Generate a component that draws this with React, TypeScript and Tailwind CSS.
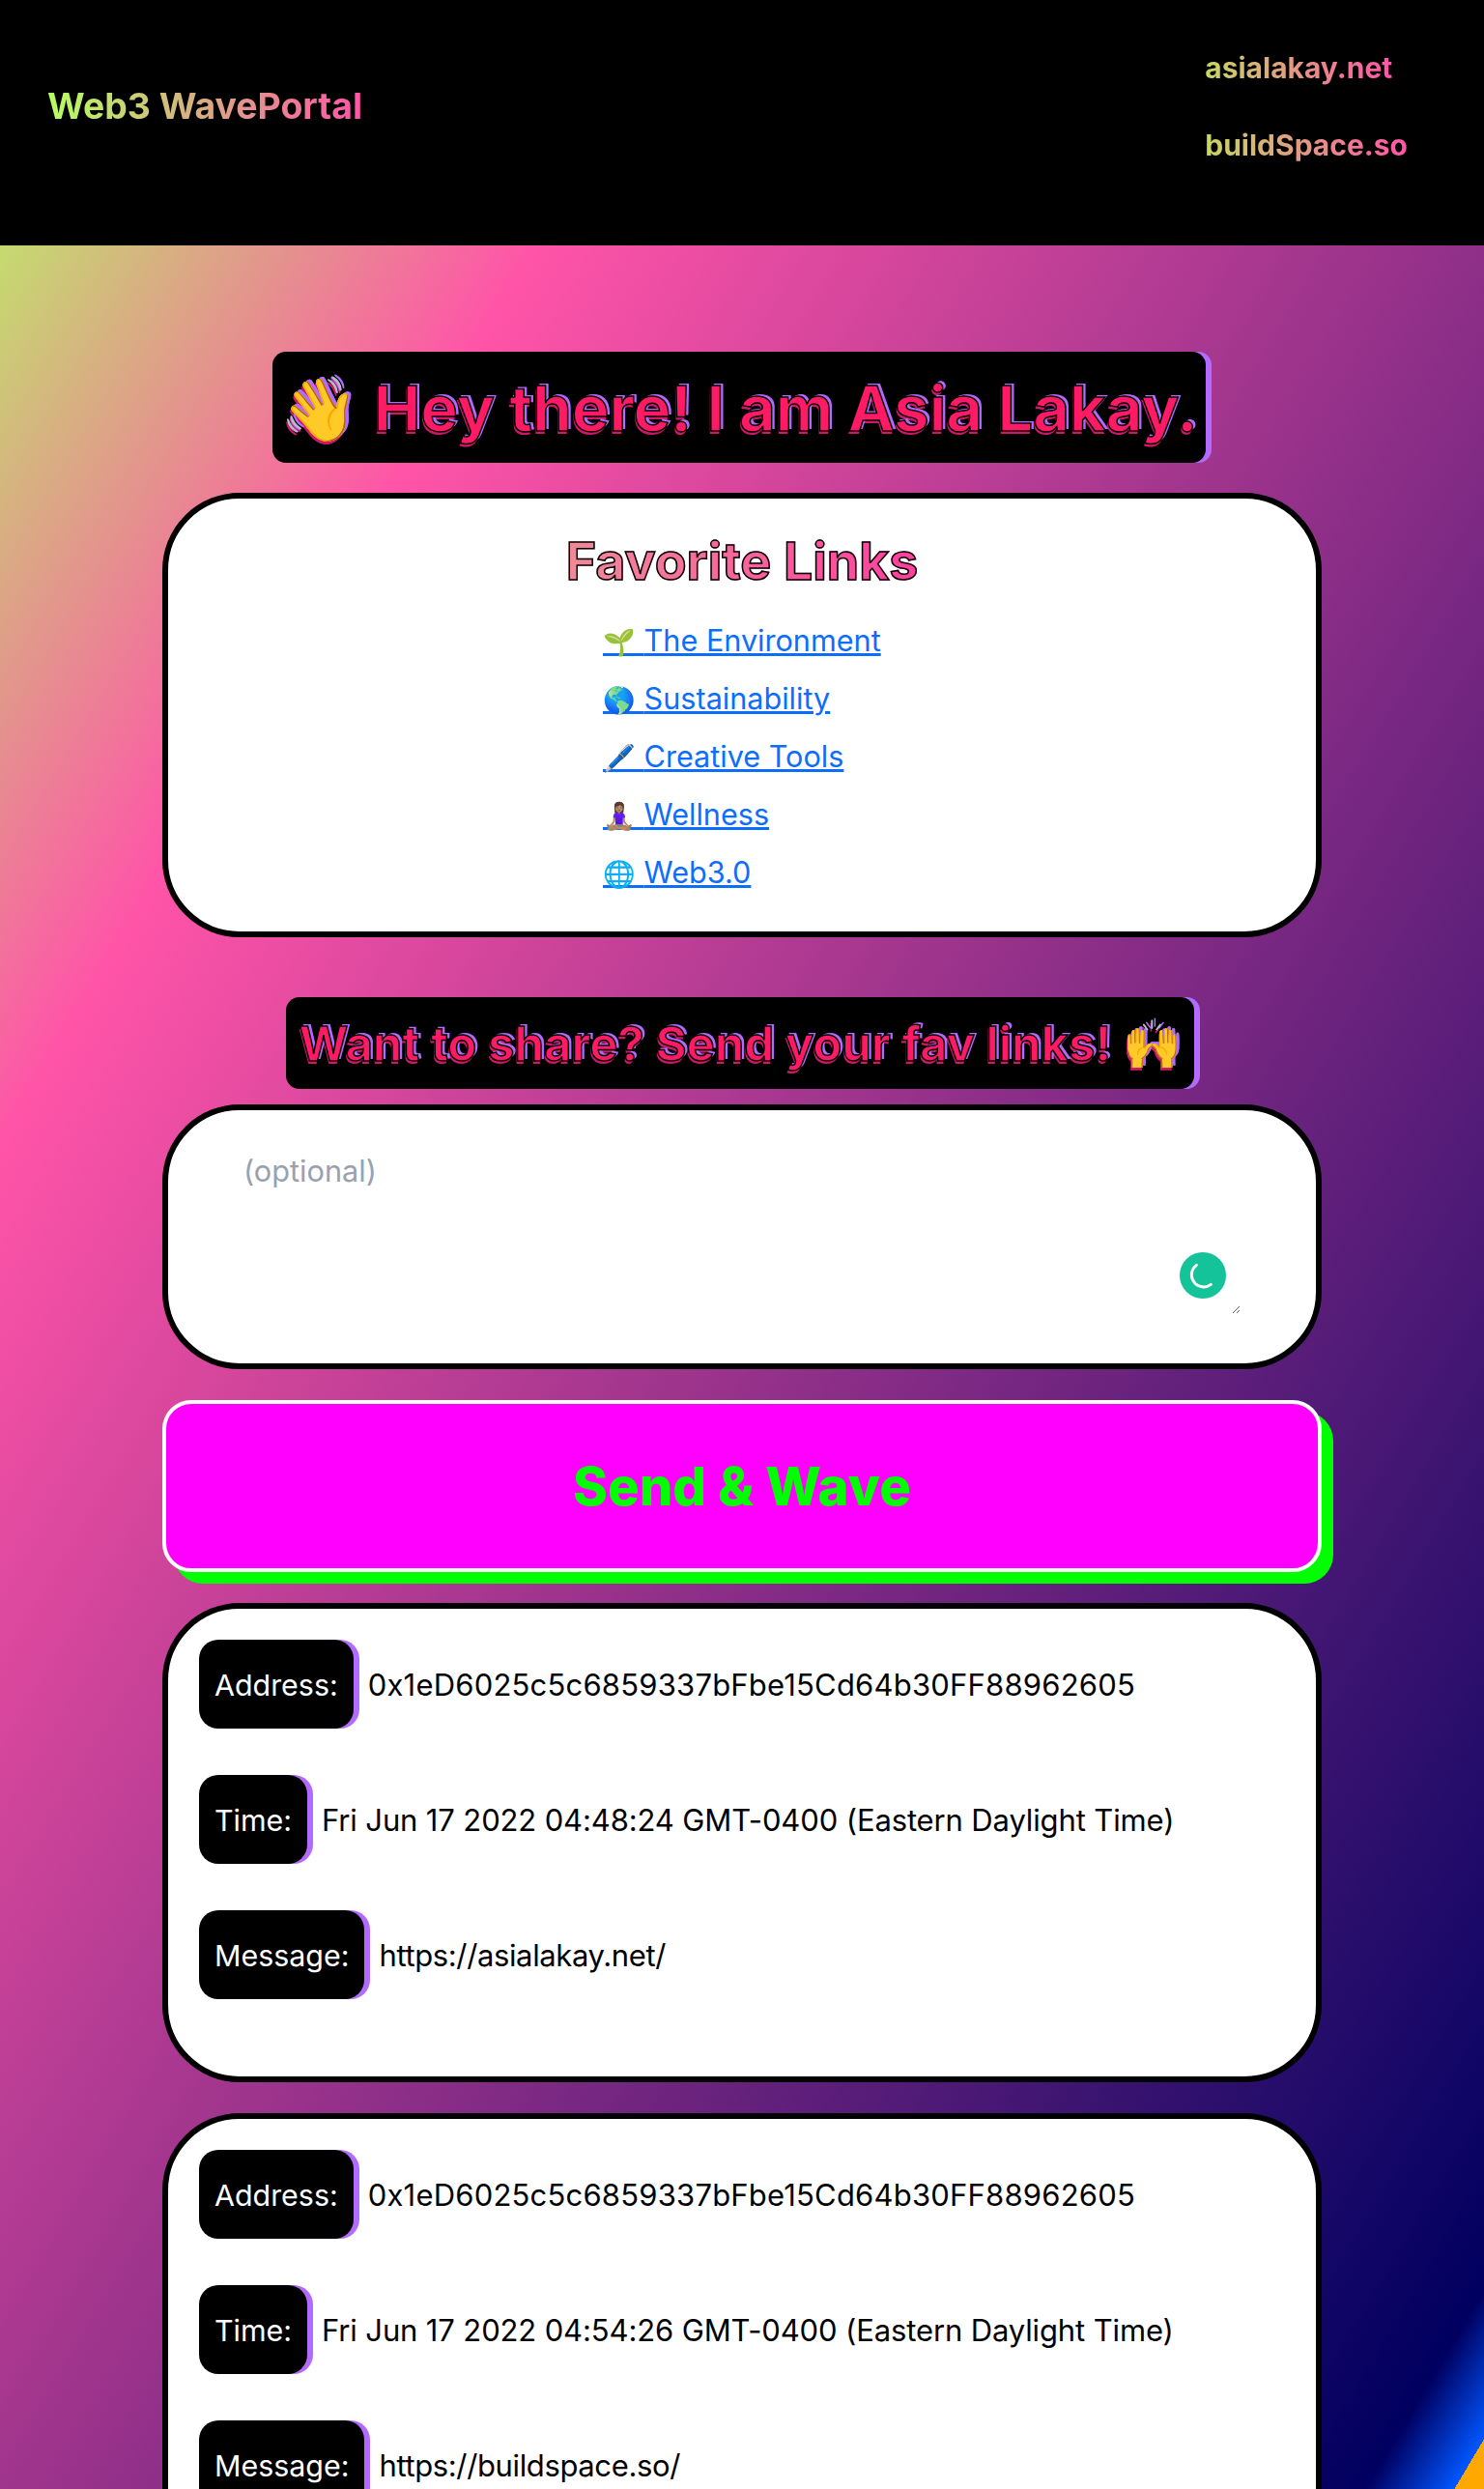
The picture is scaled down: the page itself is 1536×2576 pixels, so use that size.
import React from "react";

const display = "font-['Inter','Liberation_Sans',sans-serif]";
const body = "font-['Inter','Liberation_Sans',sans-serif]";

const links = [
  { emoji: "🌱", label: "The Environment" },
  { emoji: "🌎", label: "Sustainability" },
  { emoji: "🖊️", label: "Creative Tools" },
  { emoji: "🧘🏽‍♀️", label: "Wellness" },
  { emoji: "🌐", label: "Web3.0" },
];

const waves = [
  {
    address: "0x1eD6025c5c6859337bFbe15Cd64b30FF88962605",
    time: "Fri Jun 17 2022 04:48:24 GMT-0400 (Eastern Daylight Time)",
    message: "https://asialakay.net/",
  },
  {
    address: "0x1eD6025c5c6859337bFbe15Cd64b30FF88962605",
    time: "Fri Jun 17 2022 04:54:26 GMT-0400 (Eastern Daylight Time)",
    message: "https://buildspace.so/",
  },
];

const Row = ({ label, value, tracking }: { label: string; value: string; tracking: string }) => (
  <div className="flex items-center gap-2">
    <span className="flex h-[92px] items-center rounded-[20px] bg-black px-[16px] pt-[3px] text-[30.4px] text-white shadow-[6px_0_0_#b36bff]">
      {label}
    </span>
    <span className={`${tracking} pt-[3px] pl-[7px] text-[31px] text-black`}>{value}</span>
  </div>
);

const App = () => {
  return (
    <div
      className={`${body} h-[2576px] overflow-hidden bg-[linear-gradient(to_bottom_right,#b5ff60_0%,#ff54a8_23%,#000060_96%,#0057ff_99%,#ffa800_99%)] text-[32px]`}
    >
      <header className="flex h-[254px] justify-between bg-black pr-[79px] pl-[49px]">
        <h1
          className={`${display} mt-[86px] h-fit bg-[linear-gradient(to_right,#b5ff60,#ff54a8)] bg-clip-text text-[37.4px] leading-[47px] font-bold text-transparent`}
        >
          Web3 WavePortal
        </h1>
        <nav className={`${display} mt-[51px] flex h-fit flex-col gap-[42px] text-[30px] leading-[38px] font-bold`}>
          <a className="w-fit bg-[linear-gradient(to_right,#c8d862,#ff54a8)] bg-clip-text text-transparent">asialakay.net</a>
          <a className="w-fit bg-[linear-gradient(to_right,#c8d862,#ff54a8)] bg-clip-text text-transparent">buildSpace.so</a>
        </nav>
      </header>

      <main className="mx-auto flex w-[1200px] flex-col items-center pt-[110px]">
        <h2
          className={`${display} flex h-[115px] w-[966px] -translate-x-[3px] items-center justify-center rounded-[14px] bg-black pt-[3px] text-[65px] font-bold whitespace-nowrap text-[#ff1a66] shadow-[6px_0_0_#b36bff] [-webkit-text-stroke:1.5px_black] [text-shadow:3px_-2px_0_#b36bff,-1px_3px_0_#d01868]`}
        >
          👋 Hey there! I am Asia Lakay.
        </h2>

        <section className="mt-[31px] flex h-[460px] w-full flex-col items-center rounded-[80px] border-[6px] border-black bg-white">
          <h3
            className={`${display} mt-[32px] bg-[linear-gradient(to_right,#f08a98,#ff3f9f)] bg-clip-text text-[53.6px] leading-[66px] font-bold text-transparent [-webkit-text-stroke:1.5px_black]`}
          >
            Favorite Links
          </h3>
          <ul className="mt-[26px] flex w-[288px] flex-col gap-[15px] text-[30.6px] leading-[45px] whitespace-nowrap text-[#0d6efd]">
            {links.map((link) => (
              <li key={link.label} className="h-[45px]">
                <a className="underline">
                  <span className="text-[27px]">{link.emoji}</span> {link.label}
                </a>
              </li>
            ))}
          </ul>
        </section>

        <h2
          className={`${display} mt-[62px] flex h-[95px] w-[940px] -translate-x-[2px] items-center justify-center rounded-[14px] bg-black pt-[2px] text-[49px] font-bold whitespace-nowrap text-[#ff1a66] shadow-[6px_0_0_#b36bff] [-webkit-text-stroke:1.5px_black] [text-shadow:3px_-2px_0_#b36bff,-1px_3px_0_#d01868]`}
        >
          Want to share? Send your fav links! 🙌
        </h2>

        <div className="relative mt-[16px] h-[274px] w-full rounded-[80px] border-[6px] border-black bg-white">
          <textarea
            placeholder="(optional)"
            className="mx-[78px] mt-[40px] h-[171px] w-[1032px] text-[30.7px] outline-none placeholder:text-gray-400"
          />
          <div className="absolute top-[147px] left-[1047px] flex h-[48px] w-[48px] items-center justify-center rounded-full bg-[#15c39a]">
            <svg viewBox="0 0 24 24" className="h-[30px] w-[30px]" fill="none" stroke="white" strokeWidth="2.4" strokeLinecap="round">
              <path d="M6.7 3.5A10 10 0 1 0 18.7 19.5" />
            </svg>
          </div>
        </div>

        <button
          className={`${display} mt-[32px] h-[178px] w-full rounded-[30px] border-[4px] border-white bg-[#ff00ff] pt-[2px] text-[54.5px] font-extrabold text-[#00ff00] shadow-[12px_12px_0_#00ff00]`}
        >
          Send &amp; Wave
        </button>

        <div className="mt-[32px] flex w-full flex-col gap-[32px]">
          {waves.map((wave) => (
            <article
              key={wave.time}
              className="flex h-[496px] flex-col gap-[48px] rounded-[80px] border-[6px] border-black bg-white pt-[32px] pl-[32px]"
            >
              <Row label="Address:" value={wave.address} tracking="tracking-[0.2px]" />
              <Row label="Time:" value={wave.time} tracking="tracking-[-0.13px]" />
              <Row label="Message:" value={wave.message} tracking="tracking-[-0.37px]" />
            </article>
          ))}
        </div>
      </main>
    </div>
  );
};

export default App;
